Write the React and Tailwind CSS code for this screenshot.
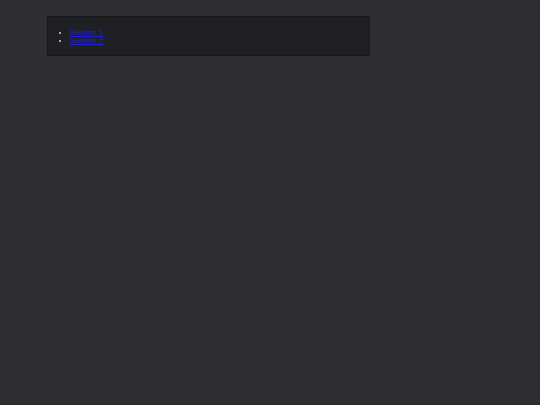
export default function App() {
  const links = ["Section 1", "Section 2"];

  return (
    <div className="min-h-[405px] w-full bg-[#2e2d32] pt-4 pl-[47px]" style={{ fontFamily: '"Liberation Sans", Arial, sans-serif' }}>
      <div className="w-[323px] h-[40px] border border-[#18181b] bg-[#1f2023] px-[12px] pt-[12px]">
        <ul className="list-disc pl-[10px] text-[8px] leading-[8px] text-[#d4d4d8]">
          {links.map((label) => (
            <li key={label}>
              <a href="#" className="text-[#2222c4] underline">
                {label}
              </a>
            </li>
          ))}
        </ul>
      </div>
    </div>
  );
}
